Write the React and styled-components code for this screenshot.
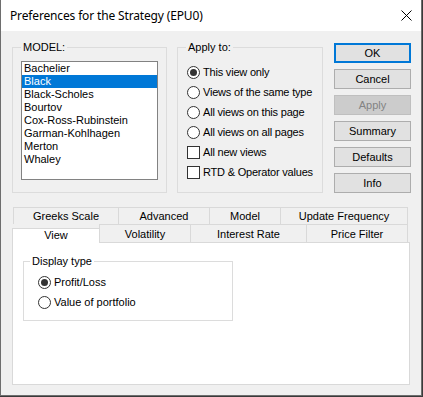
import styled, { createGlobalStyle } from "styled-components";

const GlobalStyle = createGlobalStyle`
  html, body {
    margin: 0;
    padding: 0;
    background: #3a3a3a;
  }
  * {
    box-sizing: border-box;
  }
`;

const models = [
  "Bachelier",
  "Black",
  "Black-Scholes",
  "Bourtov",
  "Cox-Ross-Rubinstein",
  "Garman-Kohlhagen",
  "Merton",
  "Whaley",
];

const applyOptions = [
  { label: "This view only", type: "radio", checked: true },
  { label: "Views of the same type", type: "radio" },
  { label: "All views on this page", type: "radio" },
  { label: "All views on all pages", type: "radio" },
  { label: "All new views", type: "check" },
  { label: "RTD & Operator values", type: "check" },
];

const buttons = [
  { label: "OK", isDefault: true },
  { label: "Cancel" },
  { label: "Apply", disabled: true },
  { label: "Summary" },
  { label: "Defaults" },
  { label: "Info" },
];

const backTabs = [
  { label: "Greeks Scale", width: 106 },
  { label: "Advanced", width: 92 },
  { label: "Model", width: 72 },
  { label: "Update Frequency", width: 128 },
];

const frontTabs = [
  { label: "View", width: 88, active: true },
  { label: "Volatility", width: 92 },
  { label: "Interest Rate", width: 117 },
  { label: "Price Filter", width: 102 },
];

const Preferences = () => {
  return (
    <>
      <GlobalStyle />
      <Window>
        <TitleBar>
          <span>Preferences for the Strategy (EPU0)</span>
          <CloseIcon width="11" height="11" viewBox="0 0 11 11">
            <path d="M0.5 0.5 L10.5 10.5 M10.5 0.5 L0.5 10.5" stroke="#000" strokeWidth="1" />
          </CloseIcon>
        </TitleBar>

        <Body>
          <TopRow>
            <Group $width={155} $pad="7px 9px 12px 8px">
              <Legend>MODEL:</Legend>
              <ListBox>
                {models.map((m) => (
                  <ListItem key={m} $selected={m === "Black"}>
                    {m}
                  </ListItem>
                ))}
              </ListBox>
            </Group>

            <Group $width={146} $pad="8px 6px 10px 9px" $ml={10}>
              <Legend $ml={-1}>Apply to:</Legend>
              {applyOptions.map((o) => (
                <OptionRow key={o.label} $narrow>
                  {o.type === "radio" ? (
                    <RadioMark>{o.checked && <Dot />}</RadioMark>
                  ) : (
                    <CheckMark />
                  )}
                  {o.label}
                </OptionRow>
              ))}
            </Group>

            <ButtonColumn>
              {buttons.map((b) => (
                <Button key={b.label} $default={b.isDefault} $disabled={b.disabled}>
                  {b.label}
                </Button>
              ))}
            </ButtonColumn>
          </TopRow>

          <TabRow $back>
            {backTabs.map((t) => (
              <Tab key={t.label} $width={t.width}>
                {t.label}
              </Tab>
            ))}
          </TabRow>
          <TabRow>
            {frontTabs.map((t) => (
              <Tab key={t.label} $width={t.width} $active={t.active}>
                {t.label}
              </Tab>
            ))}
          </TabRow>

          <Panel>
            <Group $width={210} $pad="4px 6px 8px 14px">
              <Legend $ml={-8}>Display type</Legend>
              <OptionRow>
                <RadioMark>
                  <Dot />
                </RadioMark>
                Profit/Loss
              </OptionRow>
              <OptionRow>
                <RadioMark />
                Value of portfolio
              </OptionRow>
            </Group>
          </Panel>
        </Body>
      </Window>
    </>
  );
};

const Window = styled.div`
  width: 422px;
  height: 396px;
  display: flex;
  flex-direction: column;
  border: 1px solid #6e6e6e;
  border-top: none;
  font-family: "Liberation Sans", Arial, sans-serif;
  font-size: 11px;
  color: #000;
`;

const TitleBar = styled.div`
  height: 31px;
  flex: none;
  display: flex;
  align-items: center;
  justify-content: space-between;
  padding: 0 9px 0 9px;
  background: #fff;
  font-family: "Noto Sans", sans-serif;
  font-size: 12px;
  letter-spacing: -0.15px;
`;

const CloseIcon = styled.svg`
  display: block;
`;

const Body = styled.div`
  flex: 1;
  background: #f0f0f0;
  padding: 10px 10px 0 11px;
  display: flex;
  flex-direction: column;
`;

const TopRow = styled.div`
  display: flex;
  align-items: stretch;
  margin-bottom: 14px;
`;

const Group = styled.fieldset`
  width: ${(p) => p.$width}px;
  margin: 0 0 0 ${(p) => p.$ml || 0}px;
  padding: ${(p) => p.$pad};
  border: 1px solid #dcdcdc;
  min-width: 0;
`;

const Legend = styled.legend`
  padding: 0 2px;
  margin-left: ${(p) => p.$ml || 0}px;
  line-height: 13px;
  height: 13px;
`;

const ListBox = styled.ul`
  list-style: none;
  margin: 0;
  padding: 0;
  width: 137px;
  height: 119px;
  border: 1px solid #828282;
  background: #fff;
`;

const ListItem = styled.li`
  height: 13px;
  line-height: 13px;
  padding-left: 2px;
  white-space: nowrap;
  background: ${(p) => (p.$selected ? "#0078d7" : "transparent")};
  color: ${(p) => (p.$selected ? "#fff" : "#000")};
`;

const OptionRow = styled.div`
  height: 20px;
  display: flex;
  align-items: center;
  gap: 3px;
  white-space: nowrap;
  letter-spacing: ${(p) => (p.$narrow ? "-0.2px" : "0")};
`;

const RadioMark = styled.span`
  width: 13px;
  height: 13px;
  flex: none;
  border: 1px solid #333;
  border-radius: 50%;
  background: #fff;
  display: flex;
  align-items: center;
  justify-content: center;
`;

const Dot = styled.span`
  width: 7px;
  height: 7px;
  border-radius: 50%;
  background: #333;
`;

const CheckMark = styled.span`
  width: 13px;
  height: 13px;
  flex: none;
  border: 1px solid #333;
  background: #fff;
`;

const ButtonColumn = styled.div`
  display: flex;
  flex-direction: column;
  gap: 6px;
  margin: 2px 0 0 11px;
`;

const Button = styled.div`
  width: 77px;
  height: 20px;
  display: flex;
  align-items: center;
  justify-content: center;
  background: ${(p) => (p.$disabled ? "#cccccc" : "#e1e1e1")};
  border: ${(p) =>
    p.$default ? "2px solid #0078d7" : p.$disabled ? "1px solid #bfbfbf" : "1px solid #adadad"};
  color: ${(p) => (p.$disabled ? "#838383" : "#000")};
`;

const TabRow = styled.div`
  display: flex;
  align-items: flex-end;
  height: ${(p) => (p.$back ? 17 : 18)}px;
  padding-left: ${(p) => (p.$back ? 1 : 0)}px;
`;

const Tab = styled.div`
  width: ${(p) => p.$width}px;
  height: ${(p) => (p.$active ? 21 : p.$back ? 17 : "100%")};
  align-self: ${(p) => (p.$active ? "auto" : "stretch")};
  margin-left: -1px;
  margin-bottom: ${(p) => (p.$active ? -1 : 0)}px;
  &:first-child {
    margin-left: 0;
  }
  position: relative;
  z-index: ${(p) => (p.$active ? 1 : 0)};
  display: flex;
  align-items: center;
  justify-content: center;
  padding-bottom: ${(p) => (p.$active ? 2 : 0)}px;
  background: ${(p) => (p.$active ? "#fff" : "#f0f0f0")};
  border: 1px solid #d9d9d9;
  border-bottom: none;
  white-space: nowrap;
`;

const Panel = styled.div`
  width: 398px;
  height: 143px;
  background: #fff;
  border: 1px solid #d9d9d9;
  padding: 12px 0 0 10px;
`;

export default Preferences;
